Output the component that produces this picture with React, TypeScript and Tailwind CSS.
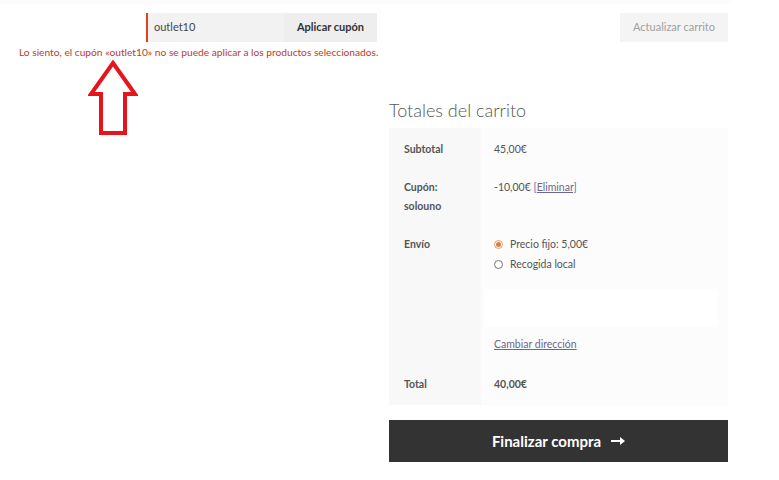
export default function App() {
  const font = { fontFamily: "Lato, 'Open Sans', sans-serif" };
  return (
    <div className="relative h-[480px] w-[779px] overflow-hidden bg-white text-[#555]" style={font}>
      <div className="h-[4px] w-[730px] bg-[#fcfcfc]" />
      <div className="flex pt-[9px]">
        <div className="flex w-[400px] flex-col">
          <div className="flex pl-[146px]">
            <div className="flex h-[29px] w-[138px] items-center border-l-2 border-[#e2401c] bg-[#f2f2f2] pl-[6px] text-[11px] text-[#43454b]">
              outlet10
            </div>
            <button
              type="button"
              className="h-[29px] w-[93px] bg-[#eeeeee] text-[11px] font-bold text-[#333]"
            >
              Aplicar cupón
            </button>
          </div>
          <p className="mt-[3px] whitespace-nowrap pl-[19px] text-[10.2px] leading-[14px] text-[#c0392b]">
            Lo siento, el cupón «outlet10» no se puede aplicar a los productos seleccionados.
          </p>
          <svg className="ml-[88px] mt-[1px]" width="50" height="76" viewBox="0 0 50 76">
            <path
              d="M25 3 L47 34 L37 34 L37 73 L13 73 L13 34 L3 34 Z"
              fill="none"
              stroke="#e8141c"
              strokeWidth="4"
              strokeLinejoin="miter"
            />
          </svg>
        </div>
        <div className="ml-[220px] flex">
          <button
            type="button"
            className="h-[29px] w-[108px] bg-[#f4f4f4] text-[11px] text-[#a0a0a0]"
          >
            Actualizar carrito
          </button>
        </div>
      </div>

      <div className="absolute left-[389px] top-[98px] w-[339px]">
        <h2 className="text-[18px] font-light leading-[24px] text-[#555]">Totales del carrito</h2>
        <div className="mt-[6px] grid grid-cols-[92px_minmax(0,1fr)] text-[10.5px]">
          <div className="bg-[#f8f8f8] px-[15px] pt-[14px] pb-[13px] font-bold leading-[15px] text-[#555]">Subtotal</div>
          <div className="bg-[#fcfcfc] px-[13px] pt-[14px] pb-[13px] leading-[15px] text-[#555]">45,00€</div>

          <div className="bg-[#f8f8f8] px-[15px] pt-[8px] pb-[9px] font-bold leading-[19px]">
            Cupón:<br />solouno
          </div>
          <div className="bg-[#fcfcfc] px-[13px] pt-[8px] leading-[19px]">
            -10,00€ <a className="text-[#6e6590] underline" href="#">[Eliminar]</a>
          </div>

          <div className="bg-[#f8f8f8] px-[15px] pt-[10px] font-bold leading-[19px]">Envío</div>
          <div className="bg-[#fcfcfc] px-[13px] pt-[10px] pb-[12px] leading-[19px]">
            <div className="flex items-center gap-[7px]">
              <span className="flex h-[9px] w-[9px] items-center justify-center rounded-full border border-[#e8a06a] bg-[#fff]">
                <span className="h-[5px] w-[5px] rounded-full bg-[#e07b39]" />
              </span>
              <span>Precio fijo: 5,00€</span>
            </div>
            <div className="mt-[1px] flex items-center gap-[7px]">
              <span className="h-[9px] w-[9px] rounded-full border border-[#777] bg-white" />
              <span>Recogida local</span>
            </div>
            <div className="-ml-[10px] mt-[15px] h-[38px] w-[233px] bg-white" />
            <a className="mt-[8px] block text-[#6e6590] underline" href="#">Cambiar dirección</a>
          </div>

          <div className="bg-[#f8f8f8] px-[15px] pt-[11px] pb-[13px] font-bold leading-[15px]">Total</div>
          <div className="bg-[#fcfcfc] px-[13px] pt-[11px] pb-[13px] font-bold leading-[15px]">40,00€</div>
        </div>
        <button
          type="button"
          className="mt-[15px] flex h-[42px] w-full items-center justify-center gap-[10px] bg-[#333] text-[15px] font-bold text-white"
        >
          Finalizar compra
          <svg width="14" height="10" viewBox="0 0 14 10">
            <path d="M0 4 H9 V1 L14 5 L9 9 V6 H0 Z" fill="white" />
          </svg>
        </button>
      </div>
    </div>
  );
}
